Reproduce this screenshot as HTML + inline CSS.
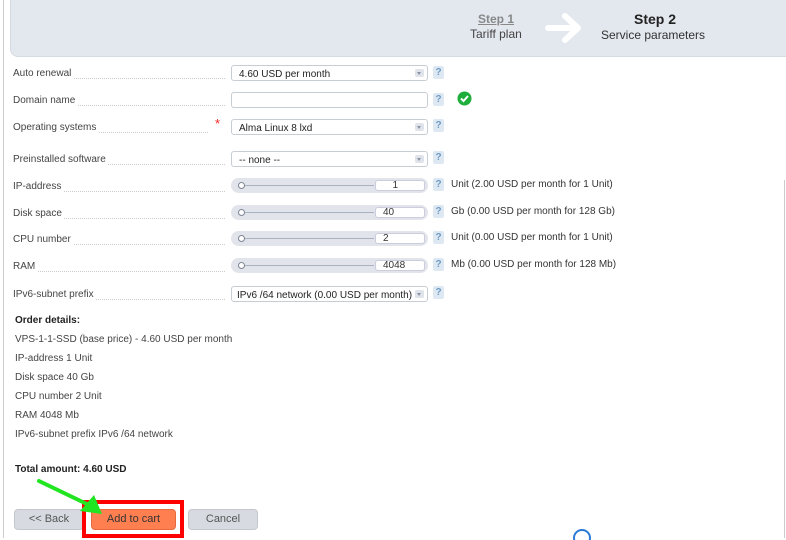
<!DOCTYPE html>
<html><head><meta charset="utf-8"><style>
*{box-sizing:border-box;margin:0;padding:0}
body{width:786px;height:538px;background:#fff;font-family:"Liberation Sans",sans-serif;font-size:10px;color:#333;position:relative;overflow:hidden}
.a{position:absolute}
.hdr{left:10px;top:0;width:790px;height:57px;background:#e3e7ee;border-radius:0 0 8px 8px;border:1px solid #d6dae2;border-top:none}
.lbl{left:13px;width:212px;height:13px;white-space:nowrap;overflow:hidden;color:#444}
.lbl span{background:#fff;padding-right:2px}
.lbl:after{content:"";position:absolute;left:0;right:0;bottom:2px;border-bottom:1px dotted #ccc;z-index:-1}
.sel{left:231px;height:16px;border:1px solid #c8ccd3;border-radius:3px;background:#fff;padding:3px 7px;font-size:10px;color:#222}
.dd{position:absolute;right:3px;top:3px;width:9px;height:8px;background:#dfe3ea;border-radius:2px}
.dd:after{content:"";position:absolute;left:2px;top:3px;border:2.5px solid transparent;border-top:3px solid #8a93a3}
.q{width:11px;height:13px;background:#dde8f2;color:#6d9bc4;font-size:10px;font-weight:bold;text-align:center;line-height:13px;border-radius:2px}
.sl{left:231px;width:197px;height:15px;background:#e1e5eb;border-radius:8px}
.sl .ln{position:absolute;left:12px;right:54px;top:7px;border-top:1px solid #aab2bf}
.sl .kn{position:absolute;left:7px;top:4px;width:7px;height:7px;border:1px solid #7d8696;border-radius:50%;background:#fff}
.sl .v{position:absolute;right:3px;top:2px;width:50px;height:11px;background:#fff;border-radius:3px;border:1px solid #ccd;font-size:10px;padding-left:7px;line-height:9px}
.note{font-size:10px;color:#333}
.od{left:15px;font-size:10px;color:#444}
.btn{top:509px;height:21px;border-radius:4px;background:#d7dbe1;border:1px solid #c4c8ce;font-size:11px;color:#555;text-align:center;line-height:19px}
</style></head><body>
<div class="a" style="left:3px;top:0;width:1px;height:538px;background:#ccc"></div>
<div class="a" style="left:784px;top:180px;width:1px;height:358px;background:#ccc"></div>
<div class="a hdr"></div>
<div class="a" style="left:478px;top:12px;font-size:12px;color:#888;text-decoration:underline;font-weight:bold">Step 1</div>
<div class="a" style="left:470px;top:27px;font-size:12px;color:#444">Tariff plan</div>
<svg class="a" style="left:545px;top:12px" width="38" height="32" viewBox="0 0 38 32"><path d="M3 16H32M20 4L33 16L20 28" fill="none" stroke="#fff" stroke-width="6" stroke-linecap="round" stroke-linejoin="round"/></svg>
<div class="a" style="left:634px;top:11px;font-size:14px;font-weight:bold;color:#222">Step 2</div>
<div class="a" style="left:601px;top:28px;font-size:12px;color:#333">Service parameters</div>

<div class="a lbl" style="top:68px"><span>Auto renewal</span></div>
<div class="a sel" style="top:65px;width:197px">4.60 USD per month<div class="dd"></div></div>
<div class="a q" style="left:433px;top:66px">?</div>

<div class="a lbl" style="top:95px"><span>Domain name</span></div>
<div class="a sel" style="top:92px;width:197px"></div>
<div class="a q" style="left:433px;top:93px">?</div>
<svg class="a" style="left:457px;top:91px" width="15" height="15"><circle cx="7.5" cy="7.5" r="7" fill="#1fae3b"/><path d="M4 7.5L6.5 10L11 5" fill="none" stroke="#fff" stroke-width="2"/></svg>

<div class="a lbl" style="top:122px;width:195px"><span>Operating systems</span></div>
<div class="a" style="left:215px;top:116px;color:#e22;font-size:13px">*</div>
<div class="a sel" style="top:119px;width:197px">Alma Linux 8 lxd<div class="dd"></div></div>
<div class="a q" style="left:433px;top:119px">?</div>

<div class="a lbl" style="top:154px"><span>Preinstalled software</span></div>
<div class="a sel" style="top:151px;width:197px">-- none --<div class="dd"></div></div>
<div class="a q" style="left:433px;top:151px">?</div>

<div class="a lbl" style="top:181px"><span>IP-address</span></div>
<div class="a sl" style="top:178px"><div class="ln"></div><div class="kn"></div><div class="v" style="text-align:right;padding-right:26px">1</div></div>
<div class="a q" style="left:433px;top:178px">?</div>
<div class="a note" style="left:451px;top:179px">Unit (2.00 USD per month for 1 Unit)</div>

<div class="a lbl" style="top:208px"><span>Disk space</span></div>
<div class="a sl" style="top:205px"><div class="ln"></div><div class="kn"></div><div class="v">40</div></div>
<div class="a q" style="left:433px;top:205px">?</div>
<div class="a note" style="left:451px;top:206px">Gb (0.00 USD per month for 128 Gb)</div>

<div class="a lbl" style="top:234px"><span>CPU number</span></div>
<div class="a sl" style="top:231px"><div class="ln"></div><div class="kn"></div><div class="v">2</div></div>
<div class="a q" style="left:433px;top:231px">?</div>
<div class="a note" style="left:451px;top:232px">Unit (0.00 USD per month for 1 Unit)</div>

<div class="a lbl" style="top:261px"><span>RAM</span></div>
<div class="a sl" style="top:258px"><div class="ln"></div><div class="kn"></div><div class="v">4048</div></div>
<div class="a q" style="left:433px;top:258px">?</div>
<div class="a note" style="left:451px;top:259px">Mb (0.00 USD per month for 128 Mb)</div>

<div class="a lbl" style="top:289px"><span>IPv6-subnet prefix</span></div>
<div class="a sel" style="top:286px;width:197px;padding-left:5px">IPv6 /64 network (0.00 USD per month)<div class="dd"></div></div>
<div class="a q" style="left:433px;top:286px">?</div>

<div class="a od" style="top:315px;font-weight:bold;color:#222">Order details:</div>
<div class="a od" style="top:334px">VPS-1-1-SSD (base price) - 4.60 USD per month</div>
<div class="a od" style="top:353px">IP-address 1 Unit</div>
<div class="a od" style="top:372px">Disk space 40 Gb</div>
<div class="a od" style="top:391px">CPU number 2 Unit</div>
<div class="a od" style="top:410px">RAM 4048 Mb</div>
<div class="a od" style="top:429px">IPv6-subnet prefix IPv6 /64 network</div>
<div class="a od" style="top:464px;font-weight:bold;color:#222">Total amount: 4.60 USD</div>

<div class="a btn" style="left:14px;width:70px">&lt;&lt; Back</div>
<div class="a" style="left:82px;top:500px;width:102px;height:38px;border:4px solid #f00"></div>
<div class="a btn" style="left:91px;width:85px;background:#ff7f50;border-color:#e86a3c;color:#333">Add to cart</div>
<div class="a btn" style="left:188px;width:70px">Cancel</div>
<svg class="a" style="left:36px;top:478px" width="70" height="40"><path d="M3 3L55 28" stroke="#22e522" stroke-width="4" stroke-linecap="round"/><path d="M44 33L66 36L58 17Z" fill="#22e522"/></svg>
<svg class="a" style="left:570px;top:526px" width="24" height="14"><circle cx="12" cy="12" r="8" fill="none" stroke="#2a7ad6" stroke-width="2"/></svg>
</body></html>
